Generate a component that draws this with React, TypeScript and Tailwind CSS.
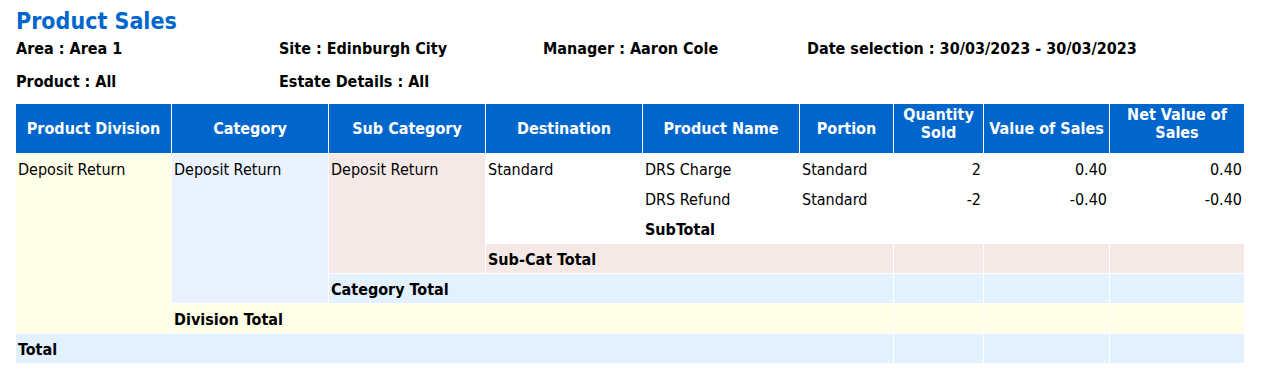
const font = { fontFamily: '"DejaVu Sans Condensed", "DejaVu Sans", sans-serif' };

const meta = [
  ["Area : Area 1", "Site : Edinburgh City", "Manager : Aaron Cole", "Date selection : 30/03/2023 - 30/03/2023"],
  ["Product : All", "Estate Details : All", "", ""],
];

const headers = [
  "Product Division",
  "Category",
  "Sub Category",
  "Destination",
  "Product Name",
  "Portion",
  "Quantity Sold",
  "Value of Sales",
  "Net Value of Sales",
];

const twoLine = ["Quantity Sold", "Net Value of Sales"];

const widths = ["w-[156px]", "w-[157px]", "w-[157px]", "w-[157px]", "w-[157px]", "w-[94px]", "w-[90px]", "w-[126px]", "w-[135px]"];

const td = "border border-white align-top px-[2px] pt-[7px] pb-0 text-[16px] leading-[18px] text-black";
const num = td + " text-right";

export default function App() {
  return (
    <div className="bg-white w-[1261px] h-[383px] pl-[15px] pt-[6px]" style={font}>
      <h1 className="pl-[1px] text-[23px] leading-[30px] font-bold text-[#0066cc]">Product Sales</h1>
      <div className="pl-[1px] grid grid-cols-[263px_264px_264px_1fr] gap-y-[14px] mt-[3px] text-[16px] leading-[19px] font-bold text-black">
        {meta.flat().map((m, i) => (
          <div key={i}>{m}</div>
        ))}
      </div>
      <table className="mt-[12px] table-fixed border-collapse w-[1229px]">
        <colgroup>
          {widths.map((w, i) => (
            <col key={i} className={w} />
          ))}
        </colgroup>
        <thead>
          <tr className="h-[50px]">
            {headers.map((h) => (
              <th
                key={h}
                className={
                  "border border-white bg-[#0066cc] px-[2px] text-[16px] leading-[18px] font-bold text-white text-center align-middle" +
                  (twoLine.includes(h) ? " pb-[9px]" : "")
                }
              >
                {h}
              </th>
            ))}
          </tr>
        </thead>
        <tbody>
          <tr className="h-[30px]">
            <td rowSpan={6} className={td + " bg-[#ffffe8]"}>Deposit Return</td>
            <td rowSpan={5} className={td + " bg-[#eaf2fe]"}>Deposit Return</td>
            <td rowSpan={4} className={td + " bg-[#f5e9e8]"}>Deposit Return</td>
            <td rowSpan={3} className={td}>Standard</td>
            <td className={td}>DRS Charge</td>
            <td className={td}>Standard</td>
            <td className={num}>2</td>
            <td className={num}>0.40</td>
            <td className={num}>0.40</td>
          </tr>
          <tr className="h-[30px]">
            <td className={td}>DRS Refund</td>
            <td className={td}>Standard</td>
            <td className={num}>-2</td>
            <td className={num}>-0.40</td>
            <td className={num}>-0.40</td>
          </tr>
          <tr className="h-[30px]">
            <td className={td + " font-bold"}>SubTotal</td>
            <td className={td}></td>
            <td className={num}></td>
            <td className={num}></td>
            <td className={num}></td>
          </tr>
          <tr className="h-[30px] bg-[#f5e9e8]">
            <td colSpan={3} className={td + " font-bold"}>Sub-Cat Total</td>
            <td className={num}></td>
            <td className={num}></td>
            <td className={num}></td>
          </tr>
          <tr className="h-[30px] bg-[#e3f0fd]">
            <td colSpan={4} className={td + " font-bold"}>Category Total</td>
            <td className={num}></td>
            <td className={num}></td>
            <td className={num}></td>
          </tr>
          <tr className="h-[30px] bg-[#ffffe8]">
            <td colSpan={5} className={td + " font-bold"}>Division Total</td>
            <td className={num}></td>
            <td className={num}></td>
            <td className={num}></td>
          </tr>
          <tr className="h-[30px] bg-[#e3f0fd]">
            <td colSpan={6} className={td + " font-bold"}>Total</td>
            <td className={num}></td>
            <td className={num}></td>
            <td className={num}></td>
          </tr>
        </tbody>
      </table>
    </div>
  );
}
